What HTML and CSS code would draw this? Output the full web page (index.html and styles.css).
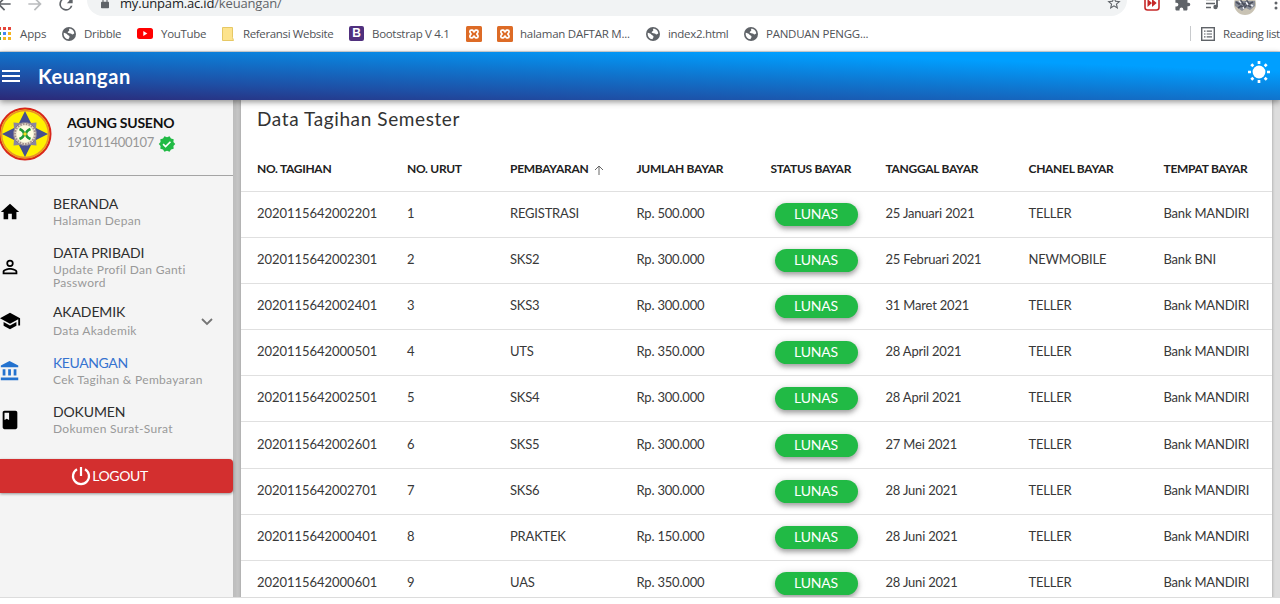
FILE: index.html
```html
<!DOCTYPE html>
<html lang="id">
<head>
<meta charset="utf-8">
<title>Keuangan</title>
<link rel="stylesheet" href="styles.css">
</head>
<body>
<svg class="defs" width="0" height="0">
  <symbol id="globe" viewBox="0 0 24 24"><circle cx="12" cy="12" r="12" fill="#5f6368"/><path d="M3 10c3 1 5 1 6 3s4 1 4 4l-2 4C6 21 2 16 3 10zM12 3c4-1 9 3 9 8l-3 2c-2-1-2-2-4-2l-4-1c-1-2 1-2 2-3s0-2 0-4z" fill="#fff"/></symbol>
  <symbol id="xampp" viewBox="0 0 16 16"><rect width="16" height="16" rx="1.500" fill="#dd6b26"/><path d="M5.200 4.200h1.100c1 0 1 1.700 1.700 1.700S8.700 4.200 9.700 4.200h1c1.700 0 1.700 2.300.6 3.100-.6.400-.6 1 0 1.400 1.100.8 1.100 3.100-.6 3.100h-1c-1 0-1-1.700-1.700-1.700s-.7 1.700-1.700 1.700H5.200c-1.700 0-1.700-2.300-.6-3.100.6-.4.600-1 0-1.400C3.500 6.500 3.500 4.200 5.200 4.200z" fill="none" stroke="#fff" stroke-width="1.700"/></symbol>
</svg>

<div class="toolbar">
  <svg class="nav-icon back" viewBox="0 0 24 24"><path d="M20 11H7.800l5.600-5.600L12 4l-8 8 8 8 1.400-1.400L7.800 13H20z"/></svg>
  <svg class="nav-icon forward" viewBox="0 0 24 24"><path d="M12 4l-1.400 1.400 5.600 5.600H4v2h12.200l-5.600 5.600L12 20l8-8z"/></svg>
  <svg class="nav-icon reload" viewBox="0 0 24 24"><path d="M17.650 6.350A8 8 0 1 0 19.730 14h-2.080A6 6 0 1 1 12 6c1.660 0 3.140.69 4.220 1.780L13 11h7V4z"/></svg>
  <div class="omnibox">
    <svg class="lock" viewBox="0 0 10 16"><path d="M2.500 7V4.500a2.500 2.500 0 0 1 5 0V7" fill="none" stroke="#5f6368" stroke-width="1.300"/><rect y="6.500" width="10" height="8" rx="1" fill="#5f6368"/></svg>
    <span class="url">my.unpam.ac.id<span class="path">/keuangan/</span></span>
    <svg class="star" viewBox="0 0 24 24"><path d="M22 9.240l-7.190-.62L12 2 9.190 8.630 2 9.240l5.460 4.730L5.820 21 12 17.270 18.180 21l-1.630-7.030zM12 15.400l-3.760 2.270 1-4.280-3.320-2.880 4.380-.38L12 6.100l1.710 4.040 4.380.38-3.320 2.880 1 4.280z"/></svg>
  </div>
  <div class="extensions">
    <svg width="16" height="16" viewBox="0 0 16 16"><rect x="1" y="1" width="14" height="14" rx="2.500" fill="#fff" stroke="#c62828" stroke-width="1.600"/><path d="M3.500 4l4.500 4-4.500 4zM8 4l4.700 4L8 12z" fill="#c62828"/></svg>
    <svg width="17" height="17" viewBox="0 0 24 24" fill="#5f6368"><path d="M20.500 11H19V7c0-1.100-.9-2-2-2h-4V3.500a2.500 2.500 0 0 0-5 0V5H4c-1.100 0-2 .9-2 2v3.800h1.500a2.700 2.700 0 0 1 0 5.400H2V20c0 1.100.9 2 2 2h3.800v-1.500a2.700 2.700 0 0 1 5.400 0V22H17c1.100 0 2-.9 2-2v-4h1.500a2.500 2.500 0 0 0 0-5z"/></svg>
    <svg width="16" height="16" viewBox="0 0 16 16"><path d="M1 4.500h9M1 8.500h9M1 12.500h5" stroke="#5f6368" stroke-width="1.600"/><path d="M12 12V4.500h3" fill="none" stroke="#5f6368" stroke-width="1.800"/><circle cx="10.500" cy="12" r="2.200" fill="#5f6368"/></svg>
    <svg width="22" height="22" viewBox="0 0 22 22"><circle cx="11" cy="11" r="11" fill="#c9c3b4"/><path d="M1 8h20v5l-5 4-4-2-4 3-4-3-3-2z" fill="#8a8e98"/><path d="M2 9l3 2 2-3 3 4 3-4 2 3 4-2M4 15l3-2 3 2 3-3 4 2" stroke="#4c505e" stroke-width="1.700" fill="none"/><path d="M5 8l2 2M12 9l2 3M17 12l2 1M9 14l1 2" stroke="#eef0f7" stroke-width="1.600"/></svg>
    <svg width="4" height="16" viewBox="0 0 4 16" fill="#5f6368"><circle cx="2" cy="3" r="1.500"/><circle cx="2" cy="8" r="1.500"/><circle cx="2" cy="13" r="1.500"/></svg>
  </div>
</div>

<div class="bookmarks">
  <svg class="apps" width="14" height="14" viewBox="0 0 14 14"><path d="M0 0h3v3H0zM5 0h3v3H5zM10 0h3v3h-3z" fill="#e5453a"/><path d="M0 5h3v3H0z" fill="#34a853"/><path d="M5 5h3v3H5z" fill="#4285f4"/><path d="M10 5h3v3h-3zM5 10h3v3H5zM10 10h3v3h-3z" fill="#f6b51e"/><path d="M0 10h3v3H0z" fill="#34a853"/></svg>
  <span class="bm b-apps">Apps</span>
  <svg class="i-globe" width="14" height="14"><use href="#globe"/></svg>
  <span class="bm b-dribble">Dribble</span>
  <svg width="16" height="11" viewBox="0 0 16 11"><rect width="16" height="11" rx="2.500" fill="#f00"/><path d="M6.300 3v5l4-2.500z" fill="#fff"/></svg>
  <span class="bm b-youtube">YouTube</span>
  <svg width="12" height="14" viewBox="0 0 12 14"><path d="M.5.500h10v10l1 3H.5z" fill="#fde38c" stroke="#e6c865"/></svg>
  <span class="bm b-ref">Referansi Website</span>
  <span class="bootstrap">B</span>
  <span class="bm b-boot">Bootstrap V 4.1</span>
  <svg class="x1" width="16" height="16"><use href="#xampp"/></svg>
  <svg class="x2" width="16" height="16"><use href="#xampp"/></svg>
  <span class="bm b-daftar">halaman DAFTAR M...</span>
  <svg width="14" height="14"><use href="#globe"/></svg>
  <span class="bm b-index">index2.html</span>
  <svg width="14" height="14"><use href="#globe"/></svg>
  <span class="bm b-panduan">PANDUAN PENGG...</span>
  <div class="reading">
    <svg width="14" height="14" viewBox="0 0 14 14"><rect x=".7" y=".7" width="12.600" height="12.600" fill="none" stroke="#5f6368" stroke-width="1.400"/><path d="M3 4.200h1.500M3 7h1.500M3 9.800h1.500M5.700 4.200H11M5.700 7H11M5.700 9.800H11" stroke="#5f6368" stroke-width="1.200"/></svg>
    <span class="bm">Reading list</span>
  </div>
</div>

<header class="appbar">
  <svg class="menu" width="18" height="12" viewBox="0 0 18 12"><path d="M0 1h18M0 6h18M0 11h18" stroke="#fff" stroke-width="1.800"/></svg>
  <h1>Keuangan</h1>
  <svg class="sun" width="24" height="24" viewBox="0 0 24 24"><circle cx="12" cy="12" r="6.400" fill="#fff"/><path d="M12 1v3M12 20v3M1 12h3M20 12h3M4.300 4.300l2 2M17.700 17.700l2 2M4.300 19.700l2-2M17.700 6.300l2-2" stroke="#fff" stroke-width="2.700"/></svg>
</header>

<div class="page">
  <aside class="sidebar">
    <div class="profile">
      <svg class="crest" viewBox="0 0 54 54"><circle cx="27" cy="27" r="25.500" fill="#fff200" stroke="#d8261c" stroke-width="2"/><circle cx="27" cy="27" r="23.500" fill="none" stroke="#e8902c" stroke-width="1.500"/><path d="M27 4l6 12H21zM27 50l-6-12h12zM4 27l12-6v12zM50 27l-12 6V21z" fill="#47508f"/><path d="M15.500 15.500l11.500 1 11.500-1-1 11.500 1 11.500-11.500-1-11.500 1 1-11.500z" fill="#8a86a0"/><circle cx="27" cy="27" r="11.500" fill="#e3dcca" stroke="#77738c" stroke-width="1"/><circle cx="27" cy="27" r="10" fill="none" stroke="#a08c88" stroke-width="1.800" stroke-dasharray="1.500 1.300"/><circle cx="27" cy="27" r="8.500" fill="#fffde0"/><path d="M21.500 22q4.500 2 4.500 5t-4.500 5M32.500 22q-4.500 2-4.500 5t4.500 5" fill="none" stroke="#1d9a35" stroke-width="2.600"/><circle cx="27" cy="27" r="1.700" fill="#f2dc21"/></svg>
      <div class="who">
        <div class="name">AGUNG SUSENO</div>
        <div class="nim"><span>191011400107</span>
          <svg width="18" height="18" viewBox="0 0 24 24"><path fill="#21ba45" d="M23 12l-2.440-2.780.34-3.680-3.610-.82-1.890-3.180L12 3 8.600 1.540 6.710 4.720l-3.610.81.34 3.680L1 12l2.440 2.780-.34 3.690 3.610.82 1.890 3.180L12 21l3.400 1.460 1.890-3.180 3.610-.82-.34-3.680z"/><path d="M6.800 12.200l3.300 3.300 6.500-6.500" fill="none" stroke="#fff" stroke-width="2.200"/></svg>
        </div>
      </div>
    </div>
    <nav>
      <a class="item n1"><svg viewBox="0 0 24 24"><path d="M10 20v-6h4v6h5v-8h3L12 3 2 12h3v8z"/></svg><div><b class="t1">BERANDA</b><i class="s1">Halaman Depan</i></div></a>
      <a class="item n2"><svg viewBox="0 0 24 24"><path d="M12 5.900a2.100 2.100 0 1 1 0 4.200 2.100 2.100 0 0 1 0-4.200m0 9c2.970 0 6.100 1.460 6.100 2.100v1.100H5.900V17c0-.64 3.130-2.100 6.100-2.100M12 4a4 4 0 1 0 0 8 4 4 0 0 0 0-8zm0 9c-2.670 0-8 1.340-8 4v3h16v-3c0-2.660-5.330-4-8-4z"/></svg><div><b class="t2">DATA PRIBADI</b><i class="s2">Update Profil Dan Ganti<br>Password</i></div></a>
      <a class="item n3"><svg viewBox="0 0 24 24"><path d="M5 13.180v4L12 21l7-3.820v-4L12 17zM12 3L1 9l11 6 9-4.910V17h2V9z"/></svg><div><b class="t3">AKADEMIK</b><i class="s3">Data Akademik</i></div><svg class="chev" viewBox="0 0 12 8"><path d="M1 1l5 5 5-5" fill="none" stroke="#757575" stroke-width="1.800"/></svg></a>
      <a class="item n4 active"><svg viewBox="0 0 24 24"><path d="M4 10v7h3v-7zm6 0v7h3v-7zM2 22h19v-3H2zm14-12v7h3v-7zM11.500 1L2 6v2h19V6z"/></svg><div><b class="t4">KEUANGAN</b><i class="s4">Cek Tagihan &amp; Pembayaran</i></div></a>
      <a class="item n5"><svg viewBox="0 0 24 24"><path d="M18 2H6c-1.100 0-2 .9-2 2v16c0 1.100.9 2 2 2h12c1.100 0 2-.9 2-2V4c0-1.100-.9-2-2-2zM6 4h5v8l-2.500-1.500L6 12z"/></svg><div><b class="t5">DOKUMEN</b><i class="s5">Dokumen Surat-Surat</i></div></a>
    </nav>
    <div class="logout"><svg width="20" height="20" viewBox="0 0 20 20"><path d="M10 1v9M6 3.200a8 8 0 1 0 8 0" fill="none" stroke="#fff" stroke-width="2.200"/></svg><span>LOGOUT</span></div>
  </aside>

  <main class="card">
    <h2>Data Tagihan Semester</h2>
    <div class="row head"><span>NO. TAGIHAN</span><span>NO. URUT</span><span class="sorted">PEMBAYARAN<svg width="10" height="10" viewBox="0 0 10 10"><path d="M5 10V1M1 5l4-4 4 4" fill="none" stroke="#666"/></svg></span><span>JUMLAH BAYAR</span><span>STATUS BAYAR</span><span>TANGGAL BAYAR</span><span>CHANEL BAYAR</span><span>TEMPAT BAYAR</span></div>
    <div class="row"><span class="num">2020115642002201</span><span>1</span><span>REGISTRASI</span><span>Rp. 500.000</span><span class="pill">LUNAS</span><span>25 Januari 2021</span><span>TELLER</span><span>Bank MANDIRI</span></div>
    <div class="row"><span class="num">2020115642002301</span><span>2</span><span>SKS2</span><span>Rp. 300.000</span><span class="pill">LUNAS</span><span>25 Februari 2021</span><span>NEWMOBILE</span><span>Bank BNI</span></div>
    <div class="row"><span class="num">2020115642002401</span><span>3</span><span>SKS3</span><span>Rp. 300.000</span><span class="pill">LUNAS</span><span>31 Maret 2021</span><span>TELLER</span><span>Bank MANDIRI</span></div>
    <div class="row"><span class="num">2020115642000501</span><span>4</span><span>UTS</span><span>Rp. 350.000</span><span class="pill">LUNAS</span><span>28 April 2021</span><span>TELLER</span><span>Bank MANDIRI</span></div>
    <div class="row"><span class="num">2020115642002501</span><span>5</span><span>SKS4</span><span>Rp. 300.000</span><span class="pill">LUNAS</span><span>28 April 2021</span><span>TELLER</span><span>Bank MANDIRI</span></div>
    <div class="row"><span class="num">2020115642002601</span><span>6</span><span>SKS5</span><span>Rp. 300.000</span><span class="pill">LUNAS</span><span>27 Mei 2021</span><span>TELLER</span><span>Bank MANDIRI</span></div>
    <div class="row"><span class="num">2020115642002701</span><span>7</span><span>SKS6</span><span>Rp. 300.000</span><span class="pill">LUNAS</span><span>28 Juni 2021</span><span>TELLER</span><span>Bank MANDIRI</span></div>
    <div class="row"><span class="num">2020115642000401</span><span>8</span><span>PRAKTEK</span><span>Rp. 150.000</span><span class="pill">LUNAS</span><span>28 Juni 2021</span><span>TELLER</span><span>Bank MANDIRI</span></div>
    <div class="row"><span class="num">2020115642000601</span><span>9</span><span>UAS</span><span>Rp. 350.000</span><span class="pill">LUNAS</span><span>28 Juni 2021</span><span>TELLER</span><span>Bank MANDIRI</span></div>
  </main>
</div>
<footer class="bottom"></footer>
</body>
</html>
```

FILE: styles.css
```css
* { box-sizing: border-box; }
body { margin: 0; width: 1280px; height: 604px; overflow: hidden; background: #fff; font-family: Lato, sans-serif; color: #222; display: flex; flex-direction: column; }
.defs { display: block; flex: none; height: 0; }
svg { flex: none; }

/* browser toolbar */
.toolbar { height: 16px; flex: none; display: flex; font-family: "Open Sans", sans-serif; }
.nav-icon { width: 20px; height: 20px; fill: #5f6368; margin-top: -6px; }
.back { margin-left: -6px; }
.forward { margin-left: 11px; fill: #babcbe; }
.reload { margin-left: 11px; }
.omnibox { width: 1044px; height: 32px; margin: -16px 0 0 11px; border-radius: 16px; background: #f1f3f4; display: flex; padding: 8px 5px 0 14px; }
.lock { width: 8px; height: 16px; margin-top: 3px; }
.url { font-size: 13px; line-height: 20px; margin: 1px 0 0 11px; color: #202124; letter-spacing: -.17px; }
.path { color: #5f6368; }
.star { width: 16px; height: 16px; margin: 3px 0 0 auto; fill: #5f6368; }
.extensions { display: flex; align-items: center; height: 20px; margin: -7px 0 0 17px; gap: 14px; width: 136px; }
.extensions svg:nth-child(4) { margin: 2px 0 0 -1px; }
.extensions svg:nth-child(5) { margin-left: 4px; }

.bookmarks { height: 36px; flex: none; border-bottom: 1px solid #d5d8db; display: flex; align-items: center; font-family: "Open Sans", sans-serif; overflow: hidden; }
.bm { font-size: 11.5px; color: #505357; white-space: nowrap; flex: none; margin-left: 8px; letter-spacing: -.3px; }
.apps { margin-left: -2px; }
.b-apps { width: 42px; letter-spacing: -.1px; }
.b-dribble { width: 53px; }
.b-youtube { width: 61px; }
.b-ref { width: 98px; margin-left: 9px; letter-spacing: -.36px; }
.bootstrap { width: 15px; height: 15px; border-radius: 2px; background: #50307e; color: #fff; font: bold 12px/15px "Liberation Sans", sans-serif; text-align: center; margin-left: 8px; }
.b-boot { width: 86px; }
.x1 { margin-left: 8px; }
.x2 { margin-left: 15px; }
.b-daftar { width: 125px; margin-left: 7px; margin-right: 1px; letter-spacing: -.25px; }
.b-index { width: 76px; }
.b-panduan { width: 120px; letter-spacing: -.25px; }
.reading { display: flex; align-items: center; margin-left: auto; width: 90px; flex: none; height: 15px; border-left: 1px solid #c8cacd; padding-left: 10px; }
.reading .bm { letter-spacing: -.4px; }

/* app bar */
.appbar { height: 48px; flex: none; display: flex; align-items: center; background: linear-gradient(to top right, #2c2876 0%, #1e4fa5 25%, #0f76cf 52%, #009fff 80%); box-shadow: 0 2px 6px rgba(0,0,0,.42); position: relative; z-index: 2; padding: 0 9px 0 2px; }
h1 { margin: -1px 0 0 18px; font: 700 20px/24px Lato, sans-serif; letter-spacing: .55px; color: #fff; }
.sun { margin: -9px 0 0 auto; }

.page { height: 497px; flex: none; display: flex; background: #ddd; overflow: hidden; }
.sidebar { width: 233px; height: 520px; background: #f4f4f4; flex: none; box-shadow: 0 0 8px 8px #bdbdbd; }
.profile { height: 76px; border-bottom: 1px solid #a4a4a4; display: flex; }
.crest { width: 54px; height: 54px; margin: 7px 0 0 -2px; }
.who { margin: 13px 0 0 15px; }
.name { font-size: 14px; line-height: 19px; font-weight: 700; color: #111; white-space: nowrap; letter-spacing: -.25px; }
.nim { display: flex; font-size: 13px; line-height: 20px; color: #979797; gap: 4px; letter-spacing: -.3px; }
.nim svg { width: 18px; height: 18px; margin-top: 3px; }
nav { height: 283px; padding-top: 19px; }
.item { display: flex; height: 49px; }
.item > svg:first-child { width: 22px; height: 22px; margin: 6px 32px 0 -1px; }
.item b { display: block; font-size: 14px; line-height: 17px; font-weight: 400; color: #2e2e2e; letter-spacing: -.12px; }
.item i { display: block; font-size: 12px; line-height: 13px; margin-top: 2px; font-style: normal; color: #999; letter-spacing: .3px; }
.n2 { height: 59px; }
.n2 > svg:first-child { margin-top: 12px; }
.n3 { height: 51px; }
.n3 > svg:first-child { margin-top: 7px; }
.item .s3 { margin-top: 4px; }
.item .chev { width: 12px; height: 8px; margin: 15px 0 0 64px; }
.active svg { fill: #2372cf; }
.active b.t4 { color: #3673d0; letter-spacing: -.4px; }
.logout { height: 34px; background: #d32f2f; border-radius: 0 4px 4px 0; box-shadow: 0 1px 3px rgba(0,0,0,.4); color: #fff; display: flex; align-items: center; justify-content: center; font-size: 14px; letter-spacing: -.4px; padding-right: 14px; gap: 1px; }
.logout span { margin-top: -2px; }

.card { width: 1031px; height: 520px; margin-left: 8px; background: #fff; box-shadow: 0 0 3px rgba(0,0,0,.3); flex: none; position: relative; }
h2 { margin: 0; padding: 7px 0 0 16px; height: 47px; font: 400 19px/24px Lato, sans-serif; letter-spacing: .6px; color: #333; }
.row { height: 46.1px; border-bottom: 1px solid #e0e0e0; display: grid; grid-template-columns: 150px 103px 126.500px 134px 115px 143px 135px 108px; align-items: center; padding: 0 0 3px 16px; font-size: 13px; letter-spacing: -.2px; white-space: nowrap; color: #383838; }
.head { height: 45px; font-size: 12px; font-weight: 700; color: #222; padding-bottom: 2px; letter-spacing: -.3px; }
.sorted svg { margin: 0 0 -2px 6px; }
.num { letter-spacing: -.03px; }
.pill { width: 83px; height: 23px; margin: 3px 0 0 4px; border-radius: 12px; background: #21ba45; color: #fff; text-align: center; line-height: 22px; font-size: 14px; box-shadow: 0 3px 5px rgba(0,0,0,.3), 0 1px 8px rgba(0,0,0,.15); }
.bottom { height: 7px; flex: none; border-top: 1px solid #dcdcdc; background: #fff; }
```
